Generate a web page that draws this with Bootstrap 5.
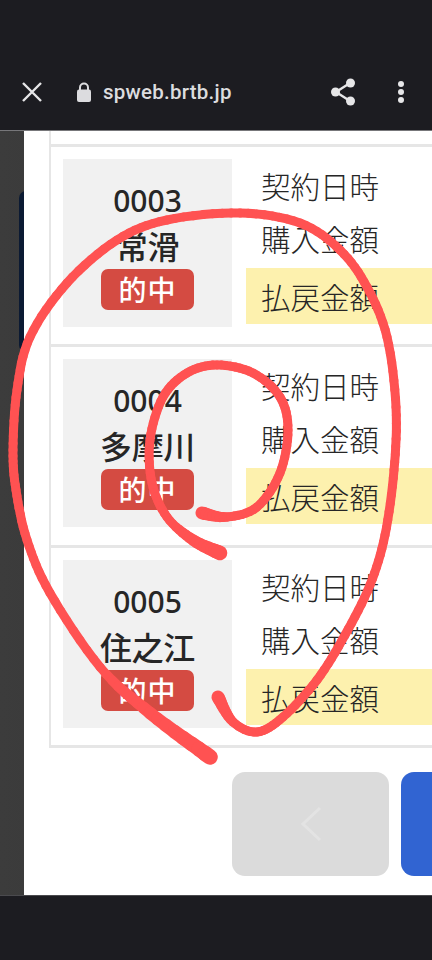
<!DOCTYPE html>
<html lang="ja"><head><meta charset="utf-8">
<meta name="viewport" content="width=device-width, initial-scale=1">
<link href="https://cdn.jsdelivr.net/npm/bootstrap@5.3.0/dist/css/bootstrap.min.css" rel="stylesheet">
<style>
html,body{margin:0;height:960px;overflow:hidden;background:#1c1c21}
.shell{width:432px;height:960px;position:relative;overflow:hidden;font-family:"Noto Sans CJK JP","Noto Sans",sans-serif;color:#262626}
.topbar{height:131px;background:#1c1c21;padding:53px 0 0 21px;color:#dcdcdf;border-bottom:1px solid #77777a}
.host{font:500 20.5px Roboto,sans-serif;letter-spacing:.25px;margin-left:11px;color:#dcdcdf}
.closeic{margin-right:33px}
.shareic{margin-left:auto;margin-right:41px}
.dotsic{margin-right:27px}
.mid{height:764px;background:linear-gradient(90deg,#3c3c3c,#2e2e2e);padding-left:24px;position:relative}
.peek{position:absolute;left:19px;top:60px;width:8px;height:161px;background:#0b1a33;border-radius:7px 0 0 7px}
.sheet{background:#fff;height:764px;padding-left:25px;overflow:hidden;position:relative}
.frame{border-left:2px solid #e6e6e6;border-bottom:3px solid #e6e6e6;margin-bottom:24px}
.stub{height:13px}
.entry{border-top:3px solid #e6e6e6;height:200.3px;padding:12px 0 0 12px;gap:14px}
.tag{width:169px;height:168px;background:#f1f1f1;padding-top:22px;line-height:1;flex-shrink:0}
.num{font-size:30px;font-weight:500;line-height:40px;font-family:"Noto Sans","Noto Sans CJK JP",sans-serif}
.venue{font-size:32px;font-weight:500;line-height:48px;letter-spacing:-.3px;white-space:nowrap}
.hit{width:93px;height:41px;background:#d44b42;border-radius:7px;color:#fff;font-size:28px;font-weight:500;line-height:41px;letter-spacing:1px}
.rows{flex:1}
.cellline{font-size:29.5px;font-weight:300;height:53px;line-height:53px;padding-left:15px;white-space:nowrap}
.paid{background:#fdf1ae;height:56px;line-height:56px;margin-top:3px}
.navrow{gap:12px;padding-left:183px}
.prevbtn{width:157px;height:104px;border-radius:13px;background:#dbdbdb;flex-shrink:0}
.nextbtn{width:60px;height:104px;border-radius:13px 0 0 13px;background:#3164d2;flex-shrink:0}
.botbar{height:65px;background:#1c1c21;border-top:1px solid #4a4a4e}
.ink{position:absolute;left:0;top:0;pointer-events:none}
</style></head><body>
<div class="shell">
<div class="topbar d-flex align-items-center">
<svg class="closeic" width="22" height="22" viewBox="0 0 22 22"><path d="M2 2L20 20M20 2L2 20" stroke="#e6e6e8" stroke-width="2.400" fill="none"/></svg>
<svg width="16" height="22" viewBox="0 0 16 22"><path d="M4 9V6.500a4 4 0 0 1 8 0V9" stroke="#dcdcdf" stroke-width="2" fill="none"/><rect x="1" y="8.500" width="14" height="12.500" rx="2" fill="#dcdcdf"/></svg>
<span class="host">spweb.brtb.jp</span>
<svg class="shareic" width="26" height="28" viewBox="0 0 26 28"><path d="M20 5L6 14L20 23" stroke="#e6e6e8" stroke-width="2.400" fill="none"/><circle cx="20.500" cy="5" r="4.500" fill="#e6e6e8"/><circle cx="5.500" cy="14" r="4.500" fill="#e6e6e8"/><circle cx="20.500" cy="23" r="4.500" fill="#e6e6e8"/></svg>
<svg class="dotsic" width="8" height="24" viewBox="0 0 8 24"><circle cx="4" cy="4" r="3" fill="#e6e6e8"/><circle cx="4" cy="12" r="3" fill="#e6e6e8"/><circle cx="4" cy="20" r="3" fill="#e6e6e8"/></svg>
</div>
<div class="mid"><div class="peek"></div><div class="sheet">
<div class="frame">
<div class="stub"></div>
<div class="entry d-flex">
<div class="tag text-center"><div class="num">0003</div><div class="venue">常滑</div><div class="hit mx-auto">的中</div></div>
<div class="rows"><div class="cellline">契約日時</div><div class="cellline">購入金額</div><div class="cellline paid">払戻金額</div></div>
</div>
<div class="entry d-flex">
<div class="tag text-center"><div class="num">0004</div><div class="venue">多摩川</div><div class="hit mx-auto">的中</div></div>
<div class="rows"><div class="cellline">契約日時</div><div class="cellline">購入金額</div><div class="cellline paid">払戻金額</div></div>
</div>
<div class="entry d-flex">
<div class="tag text-center"><div class="num">0005</div><div class="venue">住之江</div><div class="hit mx-auto">的中</div></div>
<div class="rows"><div class="cellline">契約日時</div><div class="cellline">購入金額</div><div class="cellline paid">払戻金額</div></div>
</div>
</div>
<div class="navrow d-flex">
<div class="prevbtn d-flex align-items-center justify-content-center"><svg width="22" height="36" viewBox="0 0 22 36"><path d="M20 2L3 18L20 34" stroke="#e3e3e3" stroke-width="3" fill="none"/></svg></div>
<div class="nextbtn"></div>
</div>
</div></div>
<div class="botbar"></div>
<svg class="ink" id="ink" width="432" height="960" viewBox="0 0 432 960" fill="none" stroke="#ff5252" stroke-linecap="round"></svg>
</div>
<script>
function stroke(p,w0,w1,n0,n1){
  var s=document.getElementById('ink'),pts=[],i,t,k=8;
  for(i=0;i<p.length-1;i++){
    var a=p[Math.max(i-1,0)],b=p[i],c=p[i+1],d=p[Math.min(i+2,p.length-1)];
    for(t=0;t<k;t++){var u=t/k,u2=u*u,u3=u2*u;
      pts.push([0,1].map(function(j){return .5*(2*b[j]+(c[j]-a[j])*u+(2*a[j]-5*b[j]+4*c[j]-d[j])*u2+(3*b[j]-a[j]-3*c[j]+d[j])*u3)}));}
  }
  pts.push(p[p.length-1]);
  var N=pts.length-1;
  for(i=0;i<N;i++){
    var w=9;
    if(i<n0)w=9+(w0-9)*(1-i/n0);
    if(N-i<n1)w=9+(w1-9)*(1-(N-i)/n1);
    var e=document.createElementNS('http://www.w3.org/2000/svg','path');
    e.setAttribute('d','M'+pts[i][0].toFixed(1)+' '+pts[i][1].toFixed(1)+'L'+pts[i+1][0].toFixed(1)+' '+pts[i+1][1].toFixed(1));
    e.setAttribute('stroke-width',w.toFixed(1));
    s.appendChild(e);
  }
}
stroke([[218,697],[233,722],[257,732],[283,717],[317,680],[345,635],[370,585],[385,535],[394,470],[396,407],[387,337],[367,287],[340,250],[300,223],[240,213],[167,220],[117,240],[67,283],[30,337],[17,390],[13,450],[16,490],[27,540],[50,593],[100,667],[150,713],[210,757]],13,16,8,16);
stroke([[202,513],[227,517],[257,507],[280,473],[288,430],[280,397],[253,373],[217,365],[187,373],[163,397],[150,440],[152,483],[167,517],[193,540],[220,553]],13,15,8,14);
</script>
<script src="https://cdn.jsdelivr.net/npm/bootstrap@5.3.0/dist/js/bootstrap.bundle.min.js"></script>
</body></html>
